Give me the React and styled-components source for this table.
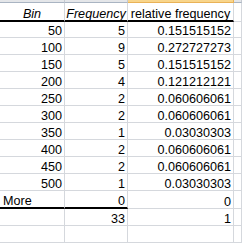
import React from "react";
import styled, { createGlobalStyle } from "styled-components";

const Global = createGlobalStyle`
  html, body { margin: 0; padding: 0; background: #ffffff; overflow: hidden; }
  #root { width: 242px; height: 243px; overflow: hidden; }
`;

const GRID = "#d5d8dd";
const WIDTHS = [65, 63, 106];

const Sheet = styled.div`
  display: flex;
  flex-direction: column;
  width: 242px;
  height: 243px;
  overflow: hidden;
  font-family: "Liberation Sans", Arial, sans-serif;
  font-size: 12.6px;
  color: #000;
`;

const Strip = styled.div`
  display: flex;
  height: 3px;
  flex: none;
`;

const StripCell = styled.div`
  box-sizing: border-box;
  height: 3px;
  flex: ${(p) => (p.$w ? `0 0 ${p.$w}px` : "1 1 auto")};
  background: ${(p) => (p.$selected ? "#f8d58b" : "#e4e6e9")};
  border-bottom: 1px solid ${(p) => (p.$selected ? "#e9b257" : "#a9b4c2")};
  border-right: 1px solid ${(p) => (p.$selected ? "#e9b257" : "#c5cad1")};
`;

const Row = styled.div`
  display: flex;
  flex: none;
  height: ${(p) => p.$h}px;
`;

const Cell = styled.div`
  box-sizing: border-box;
  flex: ${(p) => (p.$w ? `0 0 ${p.$w}px` : "1 1 auto")};
  height: 100%;
  display: flex;
  align-items: flex-end;
  justify-content: ${(p) =>
    p.$align === "right" ? "flex-end" : p.$align === "center" ? "center" : "flex-start"};
  padding: 0 ${(p) => (p.$align === "right" ? "2px" : "0")} 0
    ${(p) => (p.$align === "left" ? "3px" : "0")};
  border-right: 1px solid ${GRID};
  border-bottom: ${(p) => (p.$thick ? "2px solid #000" : `1px solid ${GRID}`)};
  font-style: ${(p) => (p.$italic ? "italic" : "normal")};
  line-height: 12px;
  white-space: nowrap;
  overflow: visible;
`;

const rows = [
  ["50", "5", "0.151515152"],
  ["100", "9", "0.272727273"],
  ["150", "5", "0.151515152"],
  ["200", "4", "0.121212121"],
  ["250", "2", "0.060606061"],
  ["300", "2", "0.060606061"],
  ["350", "1", "0.03030303"],
  ["400", "2", "0.060606061"],
  ["450", "2", "0.060606061"],
  ["500", "1", "0.03030303"],
];

export default function App() {
  return (
    <>
      <Global />
      <Sheet>
        <Strip>
          <StripCell $w={WIDTHS[0]} />
          <StripCell $w={WIDTHS[1]} />
          <StripCell $w={WIDTHS[2]} $selected />
          <StripCell />
        </Strip>
        <Row $h={19}>
          <Cell $w={WIDTHS[0]} $align="center" $italic $thick>Bin</Cell>
          <Cell $w={WIDTHS[1]} $align="center" $italic $thick>Frequency</Cell>
          <Cell $w={WIDTHS[2]} $align="center" $thick>relative frequency</Cell>
          <Cell />
        </Row>
        {rows.map((r, i) => (
          <Row key={r[0]} $h={i === 0 ? 16 : 17}>
            <Cell $w={WIDTHS[0]} $align="right">{r[0]}</Cell>
            <Cell $w={WIDTHS[1]} $align="right">{r[1]}</Cell>
            <Cell $w={WIDTHS[2]} $align="right">{r[2]}</Cell>
            <Cell />
          </Row>
        ))}
        <Row $h={18}>
          <Cell $w={WIDTHS[0]} $align="left" $thick>More</Cell>
          <Cell $w={WIDTHS[1]} $align="right" $thick>0</Cell>
          <Cell $w={WIDTHS[2]} $align="right">0</Cell>
          <Cell />
        </Row>
        <Row $h={17}>
          <Cell $w={WIDTHS[0]} />
          <Cell $w={WIDTHS[1]} $align="right">33</Cell>
          <Cell $w={WIDTHS[2]} $align="right">1</Cell>
          <Cell />
        </Row>
        <Row $h={17}>
          <Cell $w={WIDTHS[0]} />
          <Cell $w={WIDTHS[1]} />
          <Cell $w={WIDTHS[2]} />
          <Cell />
        </Row>
      </Sheet>
    </>
  );
}
